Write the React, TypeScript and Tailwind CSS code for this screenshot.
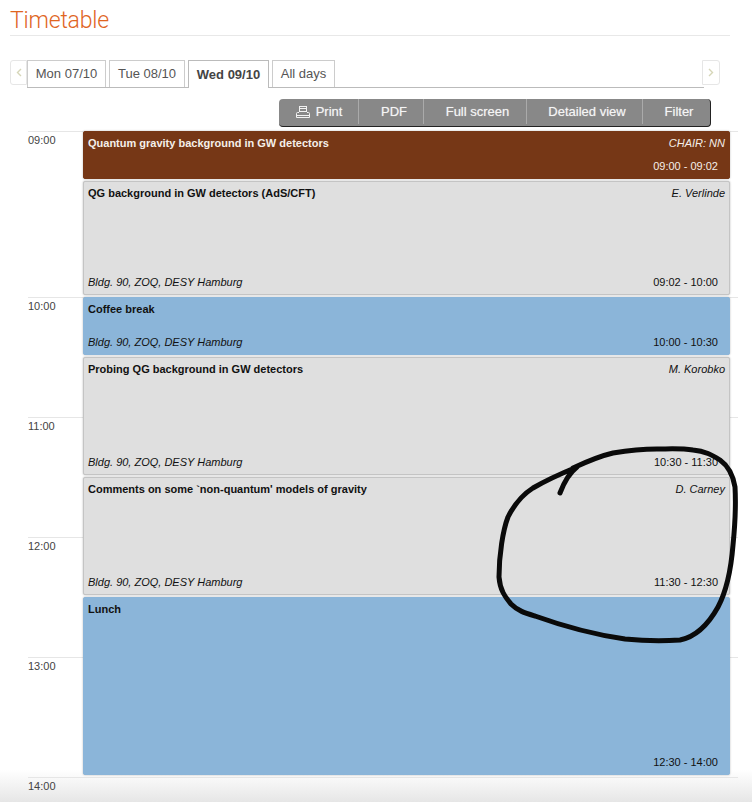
const tabs = [
  { label: "Mon 07/10", width: "w-[79px]" },
  { label: "Tue 08/10", width: "w-[76px]" },
  { label: "Wed 09/10", width: "w-[81px]", active: true },
  { label: "All days", width: "w-[63px]" },
];

const hours = [
  { label: "09:00", height: "h-[166px]" },
  { label: "10:00", height: "h-[120px]" },
  { label: "11:00", height: "h-[120px]" },
  { label: "12:00", height: "h-[120px]" },
  { label: "13:00", height: "h-[120px]" },
  { label: "14:00", height: "h-[25px]" },
];

type Block = {
  title: string;
  speaker?: string;
  room?: string;
  time: string;
  height: string;
  color: string;
};

const room = "Bldg. 90, ZOQ, DESY Hamburg";

const blocks: Block[] = [
  {
    title: "Quantum gravity background in GW detectors",
    speaker: "CHAIR: NN",
    time: "09:00 - 09:02",
    height: "h-[48px]",
    color: "bg-[#763716] border-[#763716] text-[#f5efe9]",
  },
  {
    title: "QG background in GW detectors (AdS/CFT)",
    speaker: "E. Verlinde",
    room,
    time: "09:02 - 10:00",
    height: "h-[114px]",
    color: "bg-[#dfdfdf] border-[#c4c4c4] text-[#111]",
  },
  {
    title: "Coffee break",
    room,
    time: "10:00 - 10:30",
    height: "h-[58px]",
    color: "bg-[#8bb5d9] border-[#8bb5d9] text-[#111]",
  },
  {
    title: "Probing QG background in GW detectors",
    speaker: "M. Korobko",
    room,
    time: "10:30 - 11:30",
    height: "h-[118px]",
    color: "bg-[#dfdfdf] border-[#c4c4c4] text-[#111]",
  },
  {
    title: "Comments on some `non-quantum' models of gravity",
    speaker: "D. Carney",
    room,
    time: "11:30 - 12:30",
    height: "h-[118px]",
    color: "bg-[#dfdfdf] border-[#c4c4c4] text-[#111]",
  },
  {
    title: "Lunch",
    time: "12:30 - 14:00",
    height: "h-[178px]",
    color: "bg-[#8bb5d9] border-[#8bb5d9] text-[#111]",
  },
];

function PrinterIcon() {
  return (
    <svg width="14" height="13" viewBox="0 0 14 13" fill="none" stroke="#f2f2f2" strokeWidth="1">
      <rect x="3.5" y="1.5" width="7" height="5" />
      <path d="M3.5 3.5h7" />
      <path d="M3 7.5H1.5a1 1 0 0 0-1 1v4h13v-4a1 1 0 0 0-1-1H11" />
      <path d="M0.5 10.5h13" />
    </svg>
  );
}

function Chevron({ right }: { right?: boolean }) {
  return (
    <svg width="6" height="9" viewBox="0 0 6 9" fill="none" stroke="#d6d6b8" strokeWidth="1.4">
      <path d={right ? "M1 1l3.5 3.5L1 8" : "M5 1L1.5 4.5 5 8"} />
    </svg>
  );
}

export default function App() {
  return (
    <div className="relative h-[802px] w-[752px] overflow-hidden bg-white font-['Liberation_Sans',sans-serif] text-[#444]">
      <div className="pointer-events-none absolute bottom-0 left-0 h-[32px] w-full bg-gradient-to-b from-transparent to-[#e6e6e6]" />

      <div className="mx-[10px] w-[720px] border-b border-[#e8e8e8] pt-[6px]">
        <h1 className="h-[29px] font-['Roboto',sans-serif] text-[23px] font-light leading-[29px] tracking-[-0.2px] text-[#e0651f]">
          Timetable
        </h1>
      </div>

      <div className="mt-[24px] flex pl-[10px]">
        <button className="flex h-[25px] w-[17px] items-center justify-center rounded-l-[3px] border border-[#e6e6e6] bg-white">
          <Chevron />
        </button>
        <div className="flex h-[28px] w-[677px] gap-[3px] border-b border-[#bbb]">
          {tabs.map((tab) => (
            <div
              key={tab.label}
              className={
                tab.active
                  ? `${tab.width} flex h-[28px] items-center justify-center border border-b-0 border-[#bbb] bg-white text-[13px] font-bold text-[#444]`
                  : `${tab.width} flex h-[27px] items-center justify-center border border-b-0 border-[#ccc] bg-white text-[13px] text-[#555]`
              }
            >
              {tab.label}
            </div>
          ))}
        </div>
        <button className="-ml-[2px] flex h-[25px] w-[18px] items-center justify-center rounded-r-[3px] border border-[#e6e6e6] bg-white">
          <Chevron right />
        </button>
      </div>

      <div className="ml-[279px] mt-[11px] flex h-[28px] w-[432px] rounded-[4px] border-b border-r border-[#222] bg-[#888] pb-[2px] text-[13px] text-[#f5f5f5] [text-shadow:0_0_1px_rgba(255,255,255,0.5)]">
        <div className="flex w-[79px] items-center justify-center gap-[6px] pl-[1px]">
          <PrinterIcon />
          Print
        </div>
        <div className="flex w-[65px] items-center justify-center border-l border-[#aaa] pl-[6px]">PDF</div>
        <div className="flex w-[103px] items-center justify-center border-l border-[#aaa] pl-[5px]">Full screen</div>
        <div className="flex w-[116px] items-center justify-center border-l border-[#aaa] pl-[5px]">Detailed view</div>
        <div className="flex flex-1 items-center justify-center border-l border-[#aaa] pl-[5px]">Filter</div>
      </div>

      <div className="relative ml-[28px] mt-[4px] w-[710px]">
        {hours.map((hour) => (
          <div key={hour.label} className={`${hour.height} border-t border-[#e6e6e6] pt-[2px] text-[11px] leading-[13px]`}>
            {hour.label}
          </div>
        ))}

        <div className="absolute left-[55px] top-0 flex w-[647px] flex-col gap-[2px]">
          {blocks.map((block) => (
            <div
              key={block.title}
              className={`${block.height} ${block.color} flex flex-col justify-between rounded-[2px] border px-[4px] pb-[5px] pt-[5px] text-[11px] leading-[13px] shadow-[0_0_2px_rgba(0,0,0,0.3)]`}
            >
              <div className="flex justify-between">
                <span className="font-bold">{block.title}</span>
                {block.speaker && <span className="italic">{block.speaker}</span>}
              </div>
              <div className="flex justify-between pr-[7px]">
                <span className="italic">{block.room}</span>
                <span>{block.time}</span>
              </div>
            </div>
          ))}
        </div>
      </div>

      <svg className="pointer-events-none absolute left-0 top-0" width="752" height="802" viewBox="0 0 752 802" fill="none">
        <path
          d="M560 493C563 485 568 474 577 467M577 467C560 474 545 481 533 488C522 495 514 505 508 517C503 530 499 555 499 577C500 590 505 597 511 604C518 611 525 613 535 616C560 625 590 634 625 639C645 641 665 641 680 640C695 637 708 625 718 607C727 590 731 570 733 545C735 525 736 505 735 487C733 475 727 465 720 460C712 455 705 451 693 450C680 448 668 449 657 449C640 449 625 451 613 453C600 456 588 461 573 468"
          stroke="#0a0a0a"
          strokeWidth="5"
          strokeLinecap="round"
          strokeLinejoin="round"
        />
      </svg>
    </div>
  );
}
